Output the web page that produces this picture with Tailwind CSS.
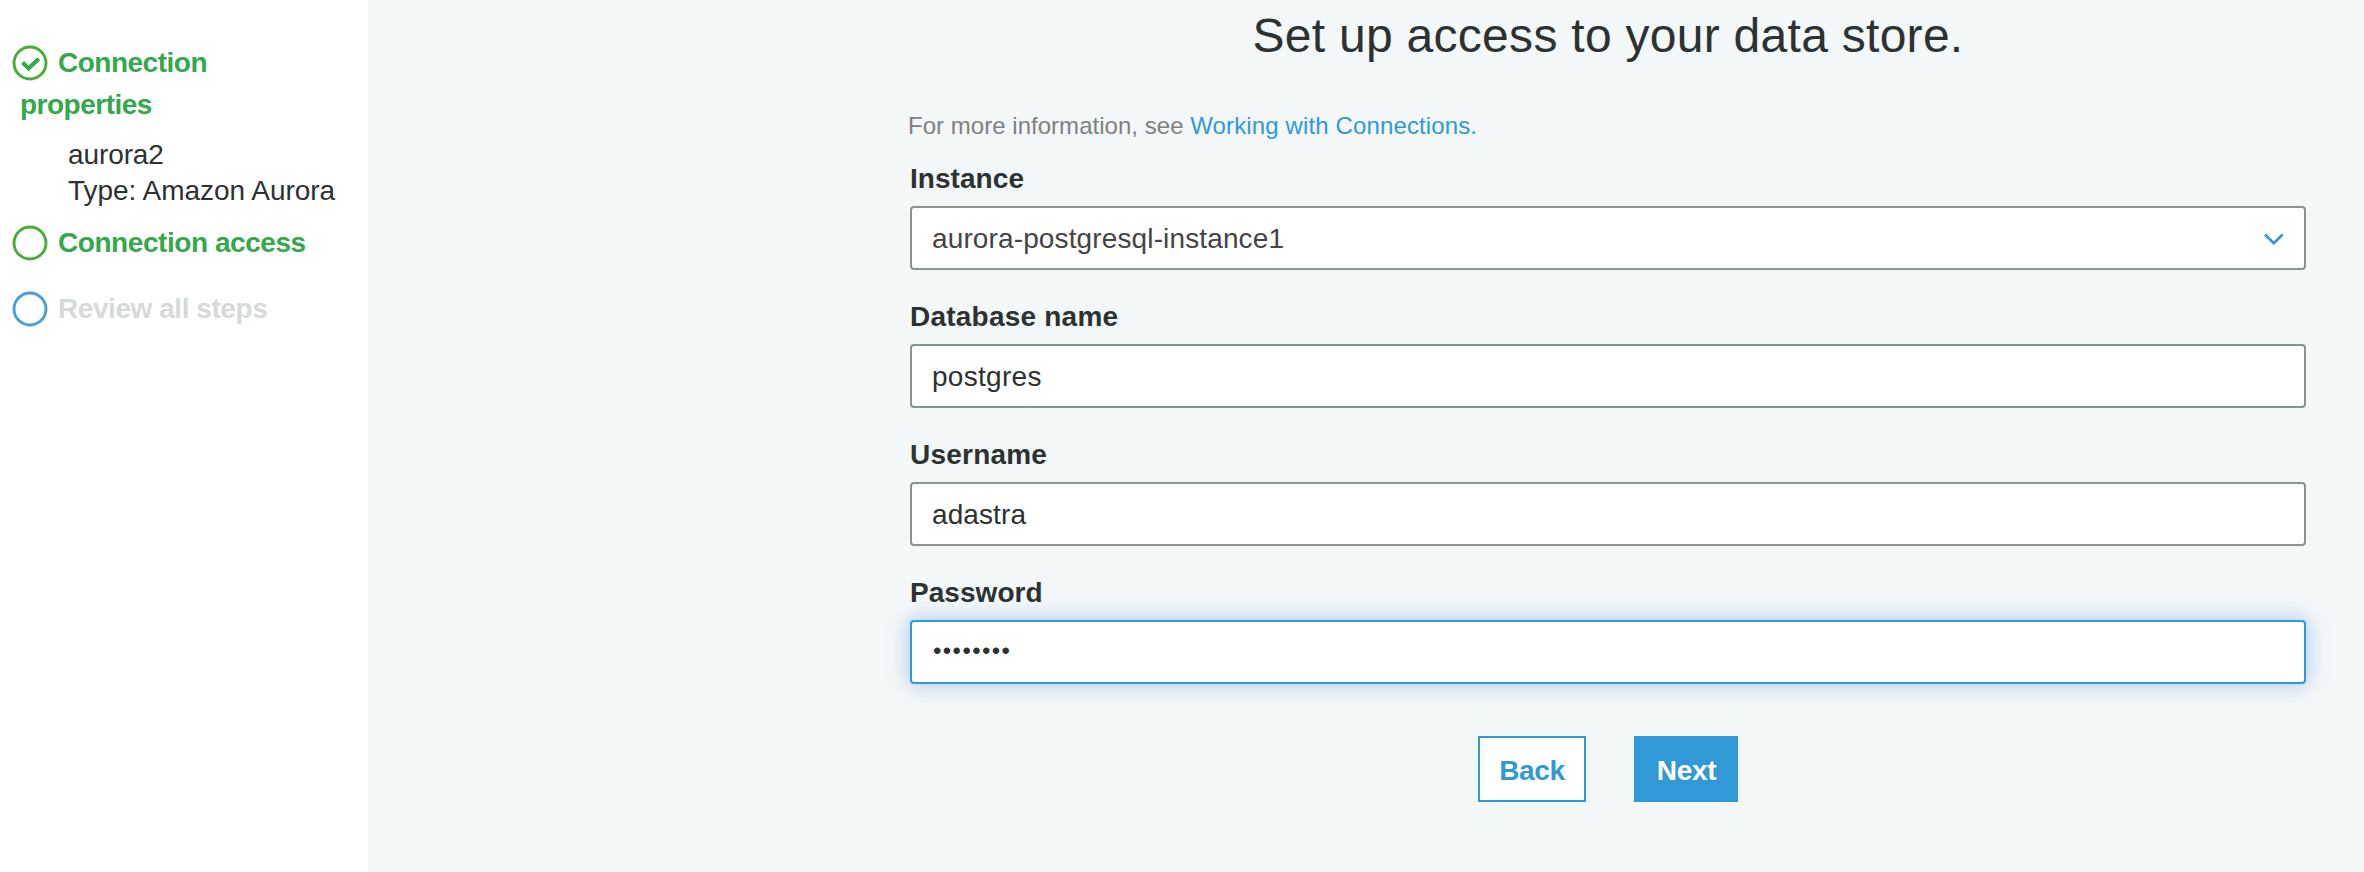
<!DOCTYPE html>
<html lang="en">
<head>
<meta charset="utf-8">
<title>Set up access to your data store</title>
<script src="https://cdn.jsdelivr.net/npm/@tailwindcss/browser@4"></script>
</head>
<body class="flex h-[872px] w-[2364px] overflow-hidden bg-[#f3f7f8] font-['Liberation_Sans',Arial,sans-serif] text-[28px] leading-[31px] text-[#2d3132]">
  <aside class="h-full w-[368px] shrink-0 bg-white pt-[45px] pl-3">
    <ol>
      <li>
        <div class="flex h-[35px] items-center font-bold tracking-[-0.5px] text-[#35a84c]">
          <svg class="mr-[10px] size-9 shrink-0" viewBox="0 0 36 36" fill="none"><circle cx="18" cy="18" r="16" stroke="#4aab39" stroke-width="2.9"/><path d="M10.6 17.6l6 5.8 10.2-9.6" stroke="#35a84c" stroke-width="4.2"/></svg>
          <span>Connection</span>
        </div>
        <div class="mt-[9px] pl-2 font-bold tracking-[-0.5px] text-[#35a84c]">properties</div>
        <div class="mt-[19px] pl-14 tracking-[-0.1px]">aurora2</div>
        <div class="mt-[5px] pl-14 tracking-[-0.03px]">Type: Amazon Aurora</div>
      </li>
      <li class="mt-[19px] flex h-[35px] items-center font-bold tracking-[-0.44px] text-[#35a84c]">
        <svg class="mr-[10px] size-9 shrink-0" viewBox="0 0 36 36" fill="none"><circle cx="18" cy="18" r="16" stroke="#4aab39" stroke-width="2.9"/></svg>
        <span>Connection access</span>
      </li>
      <li class="mt-[31px] flex h-[35px] items-center font-bold tracking-[-0.44px] text-[#d5dada]">
        <svg class="mr-[10px] size-9 shrink-0" viewBox="0 0 36 36" fill="none"><circle cx="18" cy="18" r="16" stroke="#479fd8" stroke-width="2.9"/></svg>
        <span>Review all steps</span>
      </li>
    </ol>
  </aside>

  <main class="flex-1 pl-[542px]">
    <form class="w-[1396px]">
      <h1 class="pt-[9px] text-center text-[48px] leading-[53px] tracking-[0.28px]">Set up access to your data store.</h1>
      <p class="-ml-[2px] mt-[50px] text-[24px] leading-[27px] tracking-[0.03px] text-[#808080]">For more information, see <a href="#" class="tracking-[0.13px] text-[#3199d6]">Working with Connections.</a></p>

      <div class="mt-[24px]">
        <label class="block font-bold tracking-[0.05px]">Instance</label>
        <div class="mt-[12px] flex h-16 items-center justify-between rounded border-2 border-[#8a9394] bg-white pr-[19px] pl-5 tracking-[0.13px] text-[#444]">
          <span class="pt-px">aurora-postgresql-instance1</span>
          <svg class="mt-px h-3 w-[22px]" viewBox="0 0 22 12" fill="none" stroke="#3199d6" stroke-width="2.7"><path d="M2 1.5l8.8 8.7 8.8-8.7"/></svg>
        </div>
      </div>
      <div class="mt-[31px]">
        <label class="block font-bold tracking-[0.22px]" for="db">Database name</label>
        <input id="db" type="text" value="postgres" class="mt-[12px] block h-16 w-full rounded border-2 border-[#8a9394] bg-white px-5 pt-[15px] pb-[14px] tracking-[0.3px]">
      </div>
      <div class="mt-[31px]">
        <label class="block font-bold tracking-[0.22px]" for="user">Username</label>
        <input id="user" type="text" value="adastra" class="mt-[12px] block h-16 w-full rounded border-2 border-[#8a9394] bg-white px-5 pt-[15px] pb-[14px] tracking-[0.1px]">
      </div>
      <div class="mt-[31px]">
        <label class="block font-bold tracking-[0.05px]" for="pass">Password</label>
        <input id="pass" type="password" value="password" class="mt-[12px] block h-16 w-full rounded border-2 border-[#3199d6] bg-white pr-5 pl-[21px] pt-[13px] pb-[16px] text-[24px] tracking-[1.4px] shadow-[0_0_20px_rgba(90,150,225,0.55)]">
      </div>

      <div class="mt-[52px] flex justify-center gap-12 font-bold tracking-[-0.3px]">
        <button type="button" class="h-[66px] w-[108px] border-2 border-[#3199d6] bg-white pt-[2px] text-[#3199d6]">Back</button>
        <button type="button" class="h-[66px] w-[104px] bg-[#3199d6] pt-[2px] pl-px text-white">Next</button>
      </div>
    </form>
  </main>
</body>
</html>
